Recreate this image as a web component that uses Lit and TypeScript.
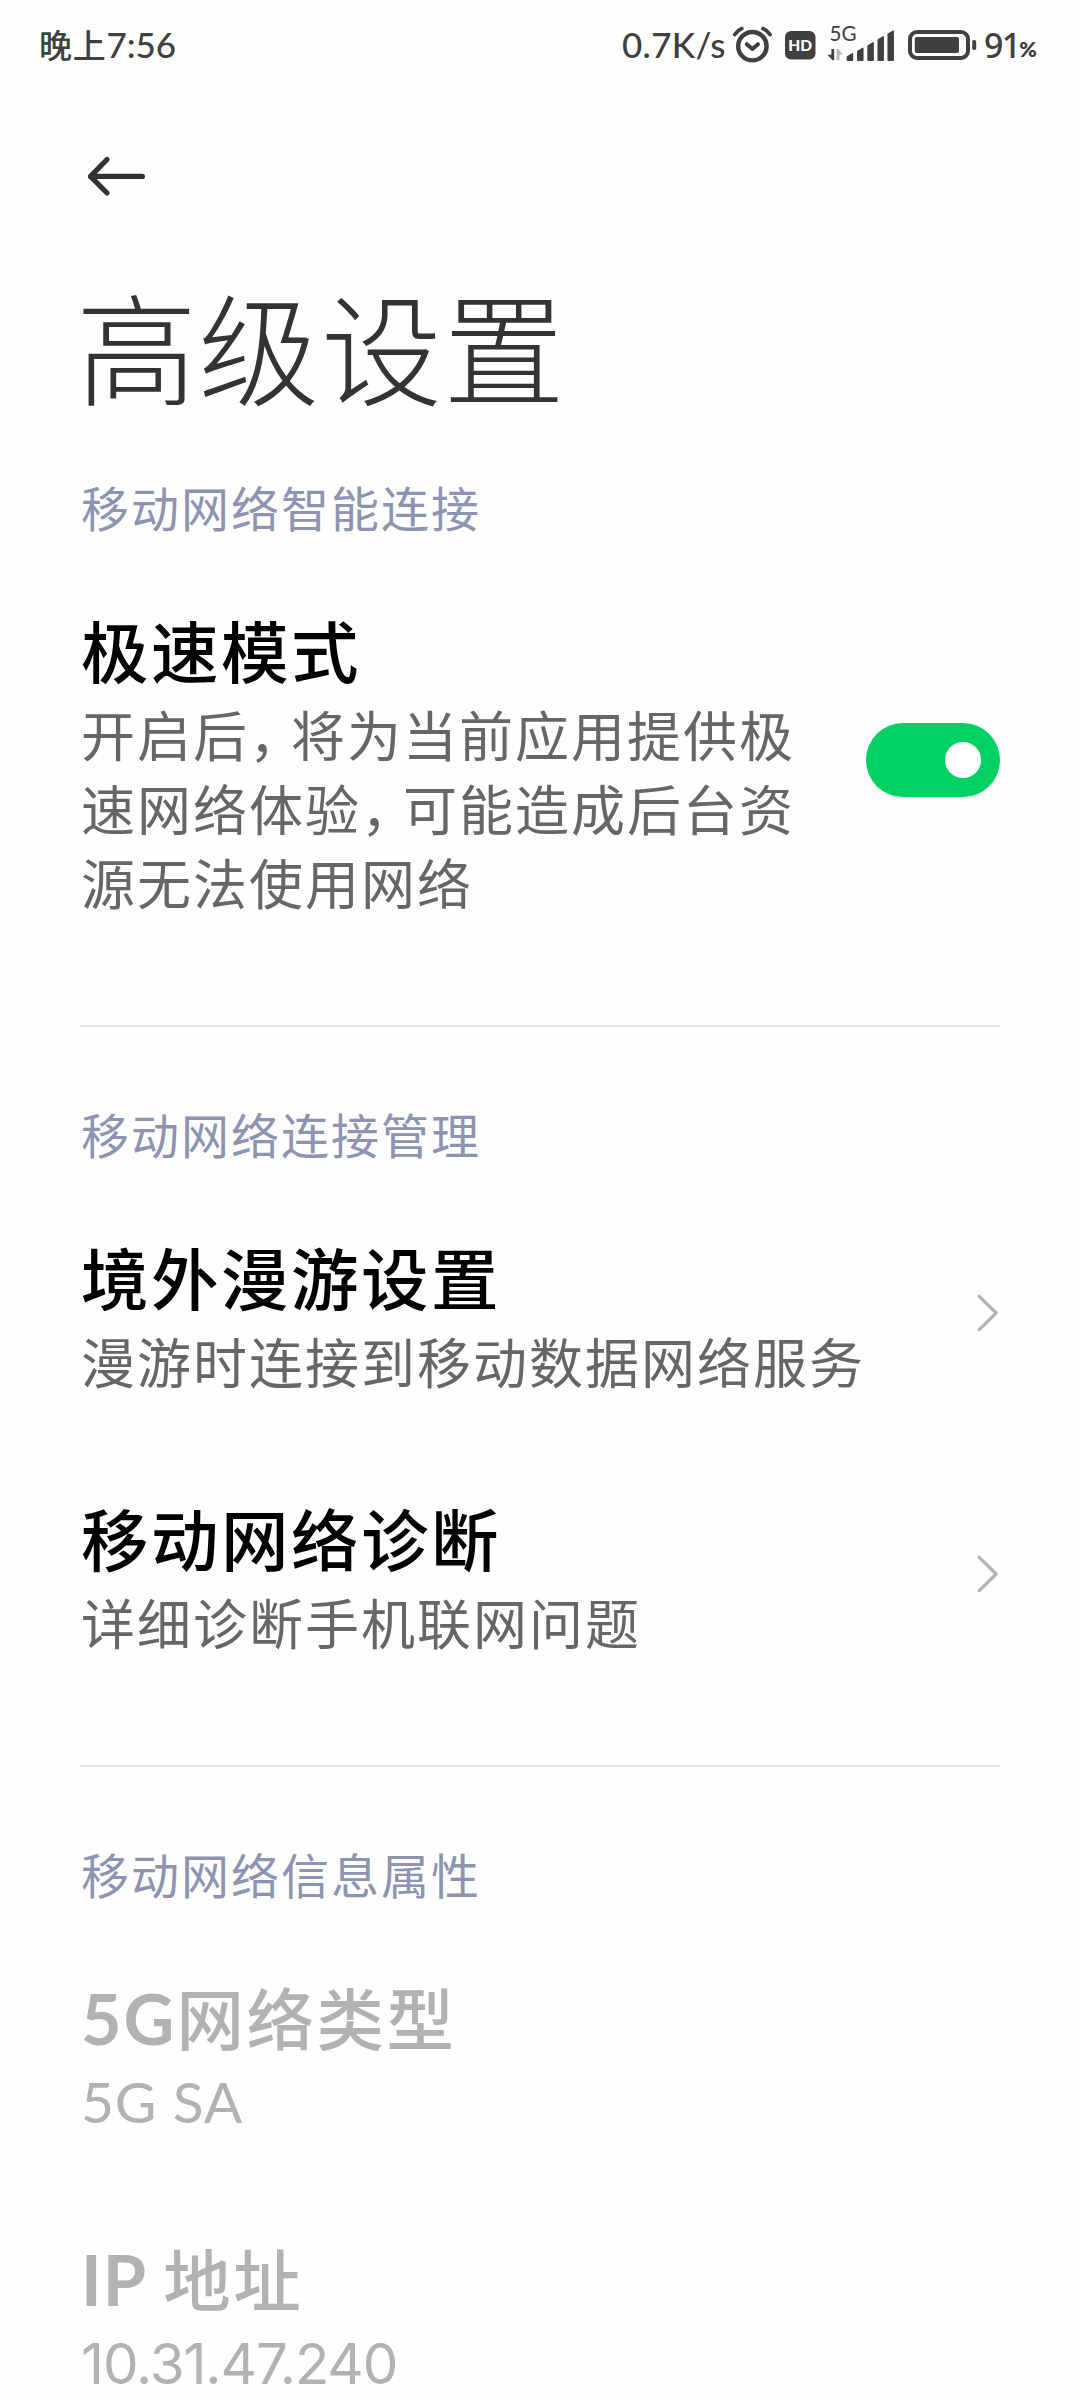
import { LitElement, html, css, svg, nothing, type TemplateResult } from "lit";
import { customElement, property, state } from "lit/decorators.js";

@customElement("status-bar")
class StatusBar extends LitElement {
  static styles = css`
    :host {
      display: flex;
      justify-content: space-between;
      height: 90px;
      padding: 0 42px 0 39px;
      box-sizing: border-box;
      color: #404040;
      font-family: "Lato", "Noto Sans CJK SC", sans-serif;
      font-size: 35px;
      font-weight: 500;
      line-height: 90px;
      white-space: nowrap;
    }
    .time { display: flex; }
    .cjk {
      font-family: "Noto Sans CJK SC", sans-serif;
      font-size: 33px;
      letter-spacing: 0.8px;
      line-height: 89px;
    }
    .digits { letter-spacing: -0.1px; line-height: 89px; }
    .right { display: flex; }
    .speed { width: 107px; letter-spacing: 0.3px; line-height: 89px; }
    .icons { display: block; width: 252px; height: 90px; }
    .level {
      display: flex;
      width: 54px;
      margin-left: 3px;
      font-family: "Noto Sans", sans-serif;
      font-size: 34px;
      letter-spacing: -1.6px;
      line-height: 90px;
    }
    .percent {
      margin-left: -0.5px;
      padding-top: 5px;
      font-family: "Lato", sans-serif;
      font-size: 21px;
      font-weight: 800;
      line-height: 88px;
    }
    .hd { font: 900 15.5px "Lato", sans-serif; fill: #fff; }
    .net { font: 400 20.5px "Lato", sans-serif; fill: #404040; }
  `;

  render() {
    const bars = [
      [845.7, 53],
      [856.1, 47.5],
      [866.4, 42],
      [876.5, 36],
      [886.5, 30.3],
    ];
    return html`
      <div class="time"><span class="cjk">晚上</span><span class="digits">7:56</span></div>
      <div class="right">
        <span class="speed">0.7K/s</span>
        <svg class="icons" viewBox="728 0 252 90">
          <g fill="none" stroke="#404040" stroke-width="4.4" stroke-linecap="round" stroke-linejoin="round">
            <circle cx="751.4" cy="46.2" r="14.2" />
            <path d="M745.800 44.2l5.6 4.8 5.6-4.8" stroke-width="4" />
            <path d="M733.800 34.6q2.6-4.2 7-6M769 34.600q-2.600-4.200-7-6" stroke-width="3.8" />
          </g>
          <rect x="784" y="31" width="30.500" height="28.500" rx="6" fill="#404040" />
          <text class="hd" x="787.300" y="51" textLength="23.800" lengthAdjust="spacingAndGlyphs">HD</text>
          <text class="net" x="828.600" y="41" textLength="27" lengthAdjust="spacingAndGlyphs">5G</text>
          <path d="M833.200 49v11.300h-1.700l-5-5.500h3.900v-5.800z" fill="#404040" />
          <path d="M835.600 60.300v-11.300h1.700l4.700 5.400h-3.500v5.900z" fill="#b8b8b8" />
          ${bars.map(
            ([x, y]) => svg`<path fill="#404040" stroke="#404040" stroke-width="1.500" stroke-linejoin="round"
              d="M${x + 0.7} ${y + 3.8}l5-3V60.200h-5z" />`,
          )}
          <rect x="909" y="32" width="58" height="26" rx="7" fill="none" stroke="#404040" stroke-width="4" />
          <rect x="913.800" y="37" width="44.200" height="16" rx="2" fill="#404040" />
          <rect x="971.200" y="40" width="4" height="10" rx="1.800" fill="#404040" />
        </svg>
        <span class="level">91<span class="percent">%</span></span>
      </div>
    `;
  }
}

@customElement("toggle-switch")
class ToggleSwitch extends LitElement {
  @property({ type: Boolean }) on = false;

  static styles = css`
    :host { display: block; }
    .track {
      display: flex;
      align-items: center;
      justify-content: flex-start;
      width: 134px;
      height: 74px;
      padding: 0 19px;
      box-sizing: border-box;
      border-radius: 37px;
      background: #e6e6e6;
    }
    .track.on { justify-content: flex-end; background: #04d163; }
    .knob { width: 36px; height: 36px; border-radius: 50%; background: #fff; }
  `;

  render() {
    return html`<div class="track ${this.on ? "on" : ""}"><div class="knob"></div></div>`;
  }
}

@customElement("setting-row")
class SettingRow extends LitElement {
  @property({ attribute: false }) heading: TemplateResult | string = "";
  @property({ attribute: false }) detail: TemplateResult | string = "";
  @property() kind = "";
  @state() private on = true;

  static styles = css`
    :host {
      display: flex;
      align-items: center;
      justify-content: space-between;
      padding: 44px 0 48px;
      font-family: "Noto Sans CJK SC", sans-serif;
    }
    .body { width: 800px; padding-left: 1px; }
    .body.narrow { width: 722px; }
    .heading {
      height: 95px;
      line-height: 94px;
      font-size: 67.5px;
      font-weight: 500;
      letter-spacing: 2.5px;
      color: #000;
      white-space: nowrap;
    }
    .detail {
      height: 74px;
      line-height: 74px;
      font-size: 54px;
      letter-spacing: 2px;
      color: #666;
      white-space: nowrap;
    }
    .narrow .detail { height: 222px; }
    .muted .heading, .muted .detail { color: #b2b2b2; }
    .muted .detail { line-height: 71px; }
    .comma { letter-spacing: -12px; }
    .latin {
      font-family: "Lato", sans-serif;
      font-size: 70px;
      font-weight: 700;
      letter-spacing: 2px;
      line-height: 1;
    }
    .heading .ip { letter-spacing: 1px; }
    .detail .latin { font-size: 57px; font-weight: 400; letter-spacing: 0.8px; }
    .detail .ip { font-family: "Inter", sans-serif; font-size: 56.5px; letter-spacing: -1.1px; }
    .control { margin-bottom: 2px; flex: none; }
    .chevron { display: block; width: 24px; height: 40px; }
  `;

  private control() {
    if (this.kind === "toggle")
      return html`<toggle-switch class="control" .on=${this.on} @click=${() => (this.on = !this.on)}></toggle-switch>`;
    if (this.kind === "link")
      return html`<svg class="control chevron" viewBox="0 0 24 40">
        <path d="M3.200 3.300L20.200 20L3.200 36.700" fill="none" stroke="#b2b2b2" stroke-width="3.200" stroke-linecap="round" stroke-linejoin="round" />
      </svg>`;
    return nothing;
  }

  render() {
    return html`
      <div class="body ${this.kind === "toggle" ? "narrow" : ""} ${this.kind === "muted" ? "muted" : ""}">
        <div class="heading">${this.heading}</div>
        <div class="detail">${this.detail}</div>
      </div>
      ${this.control()}
    `;
  }
}

const comma = html`<span class="comma">，</span>`;

const groups = [
  {
    label: "移动网络智能连接",
    rows: [
      {
        heading: "极速模式",
        detail: html`开启后${comma}将为当前应用提供极<br />速网络体验${comma}可能造成后台资<br />源无法使用网络`,
        kind: "toggle",
      },
    ],
  },
  {
    label: "移动网络连接管理",
    rows: [
      { heading: "境外漫游设置", detail: "漫游时连接到移动数据网络服务", kind: "link" },
      { heading: "移动网络诊断", detail: "详细诊断手机联网问题", kind: "link" },
    ],
  },
  {
    label: "移动网络信息属性",
    rows: [
      {
        heading: html`<span class="latin">5G</span>网络类型`,
        detail: html`<span class="latin">5G SA</span>`,
        kind: "muted",
      },
      {
        heading: html`<span class="latin ip">IP </span>地址`,
        detail: html`<span class="latin ip">10.31.47.240</span>`,
        kind: "muted",
      },
    ],
  },
];

@customElement("app-root")
class AppRoot extends LitElement {
  static styles = css`
    :host {
      display: block;
      width: 1080px;
      height: 2400px;
      overflow: hidden;
      background: #fefefe;
      font-family: "Noto Sans CJK SC", sans-serif;
    }
    .nav { height: 166px; padding-left: 80px; }
    .back { display: block; width: 72px; height: 166px; }
    .title {
      height: 181px;
      margin: 0;
      padding-left: 76px;
      line-height: 175px;
      font-size: 121px;
      font-weight: 300;
      letter-spacing: 1.5px;
      color: #333;
    }
    .groups { padding: 0 80px; }
    .group { padding: 76px 0 58px; border-bottom: 2px solid #e4e4e4; }
    .group:first-child { padding-top: 39px; }
    .group:last-child { border: 0; }
    .label {
      height: 60px;
      margin-bottom: 22px;
      padding-left: 1px;
      line-height: 60px;
      font-size: 48px;
      letter-spacing: 2px;
      color: #8c94b2;
    }
  `;

  render() {
    return html`
      <status-bar></status-bar>
      <div class="nav">
        <svg class="back" viewBox="80 90 72 166">
          <path d="M107 159.500L90.500 176.400L107 193M90.500 176.400H142.400" fill="none" stroke="#333" stroke-width="5.200" stroke-linecap="round" stroke-linejoin="round" />
        </svg>
      </div>
      <h1 class="title">高级设置</h1>
      <div class="groups">
        ${groups.map(
          (g) => html`<section class="group">
            <div class="label">${g.label}</div>
            ${g.rows.map((r) => html`<setting-row .heading=${r.heading} .detail=${r.detail} .kind=${r.kind}></setting-row>`)}
          </section>`,
        )}
      </div>
    `;
  }
}
